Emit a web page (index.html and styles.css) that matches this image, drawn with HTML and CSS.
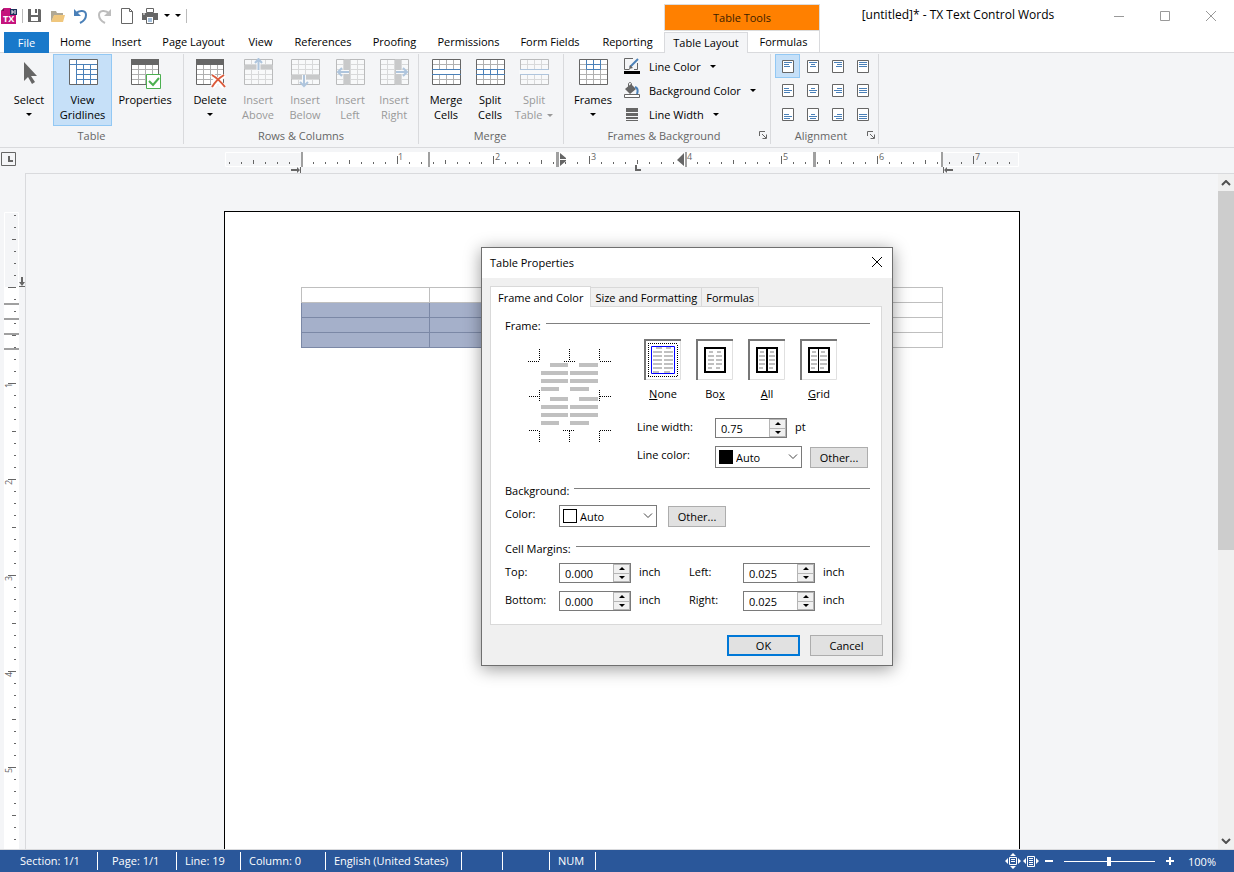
FILE: index.html
```html
<!DOCTYPE html>
<html lang="en">
<head>
<meta charset="utf-8">
<title>[untitled]* - TX Text Control Words</title>
<link rel="stylesheet" href="styles.css">
</head>
<body>

<!-- shared icon parts -->
<svg class="defs" width="0" height="0" aria-hidden="true">
  <symbol id="grid" viewBox="0 0 32 32">
    <path d="M.5.5h28v25H.5z" fill="#fff"/>
    <path d="M7.5 1v24M14.5 1v24M21.5 1v24M1 5.5h27M1 10.5h27M1 15.5h27M1 20.5h27" fill="none" stroke="#b0b0b0"/>
    <path d="M.5.5h28v25H.5z" fill="none" stroke="#666"/>
  </symbol>
  <symbol id="grid-head" viewBox="0 0 32 32">
    <path d="M.5.5h27v25H.5z" fill="#fff"/>
    <path d="M7.5 5v20M14.5 5v20M21.5 5v20M1 10.5h26M1 15.5h26M1 20.5h26" fill="none" stroke="#b0b0b0"/>
    <path d="M.5.5h27v25H.5z" fill="none" stroke="#666"/>
    <path d="M0 0h28v6H0z" fill="#666"/>
  </symbol>
  <symbol id="launcher" viewBox="0 0 8 8">
    <path d="M.5 5V.5H6M3 3l4 4M7.5 3.5v4h-4" fill="none" stroke="#666"/>
  </symbol>
  <symbol id="chevron" viewBox="0 0 10 6">
    <path d="M1 .5l4 4 4-4" fill="none" stroke="#444"/>
  </symbol>
</svg>

<div class="app">

  <header class="titlebar">
    <div class="quick">
      <svg class="logo" width="16" height="16" viewBox="0 0 16 16">
        <path d="M0 3l3-3h7v6h5v10H0z" fill="#c5147d"/>
        <path d="M0 3l3-3v3z" fill="#7d0d50"/>
        <path d="M9 1h7v6H9z" fill="#1c2f5a"/>
        <path d="M10 3h2v2h-2M13 3h2M13 5h2" fill="none" stroke="#fff"/>
        <text x="2" y="14" class="logo-text">TX</text>
      </svg>
      <span class="quick-sep"></span>
      <button class="quick-btn" aria-label="Save">
        <svg width="16" height="16" viewBox="0 0 16 16">
          <path d="M1 1h3v6h7V1h2l1 1v12H1z" fill="#666"/><path d="M8 1h2v4H8z" fill="#666"/><path d="M4 9h7v4H4z" fill="#fff"/>
        </svg>
      </button>
      <button class="quick-btn" aria-label="Open">
        <svg width="16" height="16" viewBox="0 0 16 16">
          <path d="M1 3h5l1 2h6v3H4l-3 6z" fill="#b0a894"/><path d="M4 7h11l-2 7H1z" fill="#f0c77d"/>
        </svg>
      </button>
      <button class="quick-btn" aria-label="Undo">
        <svg width="16" height="16" viewBox="0 0 16 16">
          <path d="M3 5.500C6 2 13 2 13 7c0 3-2 6-6 8" fill="none" stroke="#4a80b8" stroke-width="2"/><path d="M1 1v7h7z" fill="#4a80b8"/>
        </svg>
      </button>
      <button class="quick-btn" aria-label="Redo">
        <svg width="16" height="16" viewBox="0 0 16 16">
          <path d="M13 5.500C10 2 3 2 3 7c0 3 2 6 6 8" fill="none" stroke="#bdbdbd" stroke-width="2"/><path d="M15 1v7H8z" fill="#bdbdbd"/>
        </svg>
      </button>
      <button class="quick-btn" aria-label="New">
        <svg width="16" height="16" viewBox="0 0 16 16">
          <path d="M2.500.5h8l3 3v12h-11zM10.500.5v3h3" fill="#fff" stroke="#666"/>
        </svg>
      </button>
      <button class="quick-btn" aria-label="Print">
        <svg width="16" height="16" viewBox="0 0 16 16">
          <path d="M0 5h16v7H0z" fill="#666"/><path d="M4.500.5h7v4h-7z" fill="#fff" stroke="#666"/><path d="M1 6h2" stroke="#fff"/><path d="M4.500 8.500h7v7h-7z" fill="#fff" stroke="#666"/><path d="M6 11h4M6 13h4" stroke="#4a80b8"/>
        </svg>
      </button>
      <button class="quick-more" aria-label="Print options"><i class="caret"></i></button>
      <button class="quick-more" aria-label="Customize toolbar"><i class="caret"></i></button>
      <span class="quick-sep"></span>
    </div>
    <div class="context-title">Table Tools</div>
    <div class="window-title">[untitled]* - TX Text Control Words</div>
    <div class="window-buttons">
      <button aria-label="Minimize"><svg width="12" height="12"><path d="M1 6.500h10" stroke="#999"/></svg></button>
      <button aria-label="Maximize"><svg width="12" height="12"><path d="M1.500 1.500h9v9h-9z" fill="none" stroke="#999"/></svg></button>
      <button aria-label="Close"><svg width="12" height="12"><path d="M1 1l10 10M11 1L1 11" stroke="#999"/></svg></button>
    </div>
  </header>

  <nav class="tabs">
    <button class="tab file">File</button>
    <button class="tab">Home</button>
    <button class="tab">Insert</button>
    <button class="tab">Page Layout</button>
    <button class="tab">View</button>
    <button class="tab">References</button>
    <button class="tab">Proofing</button>
    <button class="tab">Permissions</button>
    <button class="tab">Form Fields</button>
    <button class="tab">Reporting</button>
    <button class="tab active">Table Layout</button>
    <button class="tab context-last">Formulas</button>
  </nav>

  <section class="ribbon">
    <div class="group">
      <div class="group-body">
        <button class="big w-48">
          <svg width="32" height="32" viewBox="0 0 32 32"><path d="M11 4v19l4-4 4 7 3-2-4-6h6z" fill="#666"/></svg>
          <span>Select</span><i class="caret"></i>
        </button>
        <button class="big w-59 pressed">
          <svg width="32" height="32" viewBox="-2 -1 32 32">
            <path d="M.5.5h28v25H.5z" fill="#fff"/>
            <path d="M1 5.500h27M7.500 1v24" stroke="#4a80b8"/>
            <path d="M14.500 5v20M21.500 5v20M7 10.500h21M7 15.500h21M7 20.500h21" stroke="#4a80b8"/>
            <path d="M.5.5h28v25H.5z" fill="none" stroke="#666"/>
          </svg>
          <span>View<br>Gridlines</span>
        </button>
        <button class="big w-66">
          <svg width="32" height="32" viewBox="-2 -1 32 32">
            <use href="#grid-head" width="32" height="32"/>
            <path d="M15.500 15.500h14v14h-14z" fill="#fff" stroke="#4cb050"/><path d="M18 22l4 4 6-7" fill="none" stroke="#4cb050" stroke-width="2"/>
          </svg>
          <span>Properties</span>
        </button>
      </div>
      <div class="group-foot"><span>Table</span></div>
    </div>

    <div class="group rows-group">
      <div class="group-body">
        <button class="big w-48">
          <svg width="32" height="32" viewBox="-2 -1 32 32">
            <use href="#grid-head" width="32" height="32"/>
            <path d="M16 16l12 12M28 16L16 28" stroke="#fff" stroke-width="5"/><path d="M16 16c5 3 9 7 13 12M28 16c-5 3-9 7-12 12" fill="none" stroke="#dc5b3c" stroke-width="2"/>
          </svg>
          <span>Delete</span><i class="caret"></i>
        </button>
        <button class="big w-48" disabled>
          <svg width="32" height="32" viewBox="-2 -1 32 32">
            <use href="#grid" width="32" height="32"/><path d="M0 6h29v4H0z" fill="#888"/>
            <path d="M14.500 12V2" stroke="#fff" stroke-width="4"/><path d="M14.500 11V1M11 4l3.500-4L18 4" fill="none" stroke="#4a80b8" stroke-width="2"/>
          </svg>
          <span>Insert<br>Above</span>
        </button>
        <button class="big w-46" disabled>
          <svg width="32" height="32" viewBox="-2 -1 32 32">
            <use href="#grid" width="32" height="32"/><path d="M0 16h29v4H0z" fill="#888"/>
            <path d="M13 16v10" stroke="#fff" stroke-width="4"/><path d="M13 16v10M9 23l4 4 4-4" fill="none" stroke="#4a80b8" stroke-width="2"/>
          </svg>
          <span>Insert<br>Below</span>
        </button>
        <button class="big w-44" disabled>
          <svg width="32" height="32" viewBox="-2 -1 32 32">
            <use href="#grid" width="32" height="32"/><path d="M8 0h6v26H8z" fill="#888"/>
            <path d="M3 13h10" stroke="#fff" stroke-width="4"/><path d="M13 13H2M6 9l-4 4 4 4" fill="none" stroke="#4a80b8" stroke-width="2"/>
          </svg>
          <span>Insert<br>Left</span>
        </button>
        <button class="big w-44" disabled>
          <svg width="32" height="32" viewBox="-2 -1 32 32">
            <use href="#grid" width="32" height="32"/><path d="M15 0h6v26h-6z" fill="#888"/>
            <path d="M16 13h11" stroke="#fff" stroke-width="4"/><path d="M16 13h11M23 9l4 4-4 4" fill="none" stroke="#4a80b8" stroke-width="2"/>
          </svg>
          <span>Insert<br>Right</span>
        </button>
      </div>
      <div class="group-foot"><span>Rows &amp; Columns</span></div>
    </div>

    <div class="group merge-group">
      <div class="group-body">
        <button class="big w-44">
          <svg width="32" height="32" viewBox="-2 -1 32 32">
            <use href="#grid" width="32" height="32"/><path d="M1 11h27v4H1z" fill="#fff"/><path d="M0 10.500h29M0 15.500h29" stroke="#4a80b8"/>
          </svg>
          <span>Merge<br>Cells</span>
        </button>
        <button class="big w-44">
          <svg width="32" height="32" viewBox="-2 -1 32 32">
            <use href="#grid" width="32" height="32"/><path d="M0 10.500h29M0 15.500h29M7.500 10v6M14.500 10v6M21.500 10v6" stroke="#4a80b8"/>
          </svg>
          <span>Split<br>Cells</span>
        </button>
        <button class="big w-44" disabled>
          <svg width="32" height="32" viewBox="-2 -1 32 32">
            <use href="#grid" width="32" height="32"/><path d="M-1 11h31v4H-1z" fill="#fff"/><path d="M0 10.500h29M0 15.500h29" stroke="#4a80b8"/>
          </svg>
          <span>Split<br>Table <i class="caret inline"></i></span>
        </button>
      </div>
      <div class="group-foot"><span>Merge</span></div>
    </div>

    <div class="group frames-group">
      <div class="group-body">
        <button class="big w-48">
          <svg width="32" height="32" viewBox="-2 -1 32 32">
            <use href="#grid" width="32" height="32"/><path d="M7.500 1v9.500h14V1M14.500 1v9M7 5.500h15" fill="none" stroke="#4a80b8"/>
          </svg>
          <span>Frames</span><i class="caret"></i>
        </button>
        <div class="small-list">
          <button class="small">
            <svg width="16" height="16" viewBox="0 0 16 16"><path d="M9 .5H.5v11h5M13.500 5v6.500H10" fill="none" stroke="#666"/><path d="M14 1l-8 8" stroke="#4a80b8" stroke-width="2"/><path d="M6 7l3 3-4 1z" fill="#666"/><path d="M0 13h16v3H0z"/></svg>
            Line Color <i class="caret"></i>
          </button>
          <button class="small">
            <svg width="16" height="16" viewBox="0 0 16 16"><path d="M1 7l6-5 5 5-6 5z" fill="#666"/><path d="M4.500 5V2c0-2 3-2 3 0v3" fill="none" stroke="#666"/><path d="M11 5c3 1 3 4 2 7" fill="none" stroke="#4a80b8" stroke-width="2"/><path d="M.5 12.500h15v3H.5z" fill="#fff" stroke="#666"/></svg>
            Background Color <i class="caret"></i>
          </button>
          <button class="small">
            <svg width="16" height="16" viewBox="0 0 16 16"><path d="M2 2h12v4H2zM2 7h12v3H2zM2 11h12v2H2zM2 14h12v1H2z" fill="#666"/></svg>
            Line Width <i class="caret"></i>
          </button>
        </div>
      </div>
      <div class="group-foot"><span>Frames &amp; Background</span><button class="launcher" aria-label="Frames and background options"><svg width="8" height="8"><use href="#launcher"/></svg></button></div>
    </div>

    <div class="group align-group">
      <div class="align-grid">
        <button class="pressed" aria-label="Top left"><svg width="12" height="13"><path class="box" d="M.5.5h11v12H.5z"/><path class="ln" d="M2 2.500h8M2 4.500h5M2 6.500h6"/></svg></button>
        <button aria-label="Top center"><svg width="12" height="13"><path class="box" d="M.5.5h11v12H.5z"/><path class="ln" d="M2 2.500h8M4 4.500h4M3 6.500h6"/></svg></button>
        <button aria-label="Top right"><svg width="12" height="13"><path class="box" d="M.5.5h11v12H.5z"/><path class="ln" d="M2 2.500h8M5 4.500h5M4 6.500h6"/></svg></button>
        <button aria-label="Top justified"><svg width="12" height="13"><path class="box" d="M.5.5h11v12H.5z"/><path class="ln" d="M2 2.500h8M2 4.500h8M2 6.500h8"/></svg></button>
        <button aria-label="Middle left"><svg width="12" height="13"><path class="box" d="M.5.5h11v12H.5z"/><path class="ln" d="M2 4.500h5M2 6.500h8M2 8.500h6"/></svg></button>
        <button aria-label="Middle center"><svg width="12" height="13"><path class="box" d="M.5.5h11v12H.5z"/><path class="ln" d="M4 4.500h4M2 6.500h8M3 8.500h6"/></svg></button>
        <button aria-label="Middle right"><svg width="12" height="13"><path class="box" d="M.5.5h11v12H.5z"/><path class="ln" d="M5 4.500h5M2 6.500h8M4 8.500h6"/></svg></button>
        <button aria-label="Middle justified"><svg width="12" height="13"><path class="box" d="M.5.5h11v12H.5z"/><path class="ln" d="M2 4.500h8M2 6.500h8M2 8.500h8"/></svg></button>
        <button aria-label="Bottom left"><svg width="12" height="13"><path class="box" d="M.5.5h11v12H.5z"/><path class="ln" d="M2 6.500h5M2 8.500h8M2 10.500h6"/></svg></button>
        <button aria-label="Bottom center"><svg width="12" height="13"><path class="box" d="M.5.5h11v12H.5z"/><path class="ln" d="M4 6.500h4M2 8.500h8M3 10.500h6"/></svg></button>
        <button aria-label="Bottom right"><svg width="12" height="13"><path class="box" d="M.5.5h11v12H.5z"/><path class="ln" d="M5 6.500h5M2 8.500h8M4 10.500h6"/></svg></button>
        <button aria-label="Bottom justified"><svg width="12" height="13"><path class="box" d="M.5.5h11v12H.5z"/><path class="ln" d="M2 6.500h8M2 8.500h8M2 10.500h8"/></svg></button>
      </div>
      <div class="group-foot"><span>Alignment</span><button class="launcher" aria-label="Alignment options"><svg width="8" height="8"><use href="#launcher"/></svg></button></div>
    </div>
  </section>

  <main class="workspace">
    <button class="tab-type" aria-label="Tab type"><svg width="15" height="14"><path d="M.5.5h14v13H.5z" fill="none" stroke="#666"/><path d="M8 4v5h4" fill="none" stroke="#666" stroke-width="2"/></svg></button>

    <div class="ruler-h">
      <svg width="796" height="25" viewBox="0 0 796 25">
        <defs>
          <pattern id="ticks-h" x="77" y="0" width="96" height="25" patternUnits="userSpaceOnUse">
            <path d="M.5 8v8M48.500 12v4M12.500 14v2M24.500 14v2M36.500 14v2M60.500 14v2M72.500 14v2M84.500 14v2" stroke="#666"/>
          </pattern>
        </defs>
        <path d="M1.500 4.500h793v14H1.500z" fill="none" stroke="#fff"/>
        <path d="M77 4h642v15H77z" fill="#fff"/>
        <path d="M1 4h794v15H1z" fill="url(#ticks-h)"/>
        <path d="M77 4h2v15h-2zM204 4h2v15h-2zM332 4h3v15h-3zM461 4h2v15h-2zM589 4h3v15h-3zM717 4h2v15h-2z" fill="#a0a0a0"/>
        <path d="M336 5l6 5v1h-6zM336 12h6v1l-6 5zM460 5v13l-7-6z" fill="#666"/>
        <path d="M412 17v5h5" fill="none" stroke="#666" stroke-width="2"/>
        <path d="M67 21h6v-2l3 3-3 3v-2h-6zM76 19h1v6h-1zM729 21h-6v-2l-3 3 3 3v-2h6zM719 19h1v6h-1z" fill="#666"/>
        <g class="ruler-num">
          <text x="174" y="12">1</text><text x="271" y="12">2</text><text x="367" y="12">3</text><text x="463" y="12">4</text><text x="559" y="12">5</text><text x="655" y="12">6</text><text x="751" y="12">7</text>
        </g>
      </svg>
    </div>

    <div class="ruler-v">
      <svg width="25" height="1200" viewBox="0 0 25 1200">
        <defs>
          <pattern id="ticks-v" x="0" y="114" width="25" height="96" patternUnits="userSpaceOnUse">
            <path d="M8 .5h8M12 48.500h4M14 12.500h2M14 24.500h2M14 36.500h2M14 60.500h2M14 72.500h2M14 84.500h2" stroke="#666"/>
          </pattern>
        </defs>
        <path d="M4.500 39.500h14v80h-14z" fill="none" stroke="#fff"/>
        <path d="M4 114h15v1086H4z" fill="#fff"/>
        <path d="M4 39h15v1161H4z" fill="url(#ticks-v)"/>
        <path d="M4 130h15v2H4zM4 145h15v2H4zM4 160h15v2H4zM4 175h15v2H4z" fill="#a0a0a0"/>
        <path d="M21 104h2v5h2l-3 4-3-4h2zM19 113h6v1h-6z" fill="#666"/>
        <g class="ruler-num">
          <text transform="translate(12 215) rotate(-90)">1</text>
          <text transform="translate(12 312) rotate(-90)">2</text>
          <text transform="translate(12 408) rotate(-90)">3</text>
          <text transform="translate(12 504) rotate(-90)">4</text>
          <text transform="translate(12 600) rotate(-90)">5</text>
        </g>
      </svg>
    </div>

    <div class="canvas">
      <div class="page">
        <table class="doc-table">
          <tr><td></td><td></td><td></td><td></td><td></td></tr>
          <tr><td class="sel"></td><td class="sel"></td><td class="sel"></td><td></td><td></td></tr>
          <tr><td class="sel"></td><td class="sel"></td><td class="sel"></td><td></td><td></td></tr>
          <tr><td class="sel"></td><td class="sel"></td><td class="sel"></td><td></td><td></td></tr>
        </table>
      </div>
    </div>

    <div class="scrollbar">
      <button aria-label="Scroll up"><svg width="10" height="6"><path d="M1 5l4-4 4 4" fill="none" stroke="#505050" stroke-width="2"/></svg></button>
      <div class="track"><div class="thumb"></div></div>
      <button aria-label="Scroll down"><svg width="10" height="6"><path d="M1 1l4 4 4-4" fill="none" stroke="#505050" stroke-width="2"/></svg></button>
    </div>
  </main>

  <footer class="status">
    <div class="status-cells">
      <span>Section: 1/1</span><span>Page: 1/1</span><span>Line: 19</span><span>Column: 0</span><span>English (United States)</span><span></span><span></span><span>NUM</span>
    </div>
    <div class="zoom">
      <button aria-label="Fit page"><svg width="16" height="16"><path d="M4.500 4.500h7v7h-7z" fill="none" stroke="#fff"/><path d="M6 6.500h4M6 8.500h4" stroke="#fff"/><path d="M8 0l3 3H5zM8 16l3-3H5zM0 8l3-3v6zM16 8l-3-3v6z" fill="#fff"/></svg></button>
      <button aria-label="Fit width"><svg width="16" height="16"><path d="M4.500 3.500h7v10h-7z" fill="none" stroke="#fff"/><path d="M6 5.500h4M6 7.500h4M6 9.500h4M6 11.500h4" stroke="#fff"/><path d="M0 8l3-3v6zM16 8l-3-3v6z" fill="#fff"/></svg></button>
      <button aria-label="Zoom out"><svg width="16" height="16"><path d="M4 8h8" stroke="#fff" stroke-width="2"/></svg></button>
      <input type="range" class="zoom-range" min="0" max="200" value="98" aria-label="Zoom">
      <button aria-label="Zoom in"><svg width="16" height="16"><path d="M4 8h8M8 4v8" stroke="#fff" stroke-width="2"/></svg></button>
      <span class="zoom-value">100%</span>
    </div>
  </footer>

  <div class="dialog" role="dialog" aria-labelledby="dialog-title">
    <div class="dialog-head">
      <span id="dialog-title">Table Properties</span>
      <button class="dialog-close" aria-label="Close"><svg width="12" height="12"><path d="M1 1l10 10M11 1L1 11" stroke="#000"/></svg></button>
    </div>
    <div class="dialog-tabs">
      <button class="active">Frame and Color</button>
      <button>Size and Formatting</button>
      <button>Formulas</button>
    </div>
    <div class="panel">

      <div class="section-title"><span>Frame:</span><hr></div>
      <div class="frame-row">
        <svg class="preview" width="84" height="94" viewBox="0 0 84 94">
          <g fill="none" stroke="#000" stroke-dasharray="1 1">
            <path d="M0 12.500h11M11.500 0v12M36 12.500h11M41.500 0v12M71.500 0v12M72 12.500h11"/>
            <path d="M1 47.500h10M11.500 41v11M71.500 41v11M72 47.500h11"/>
            <path d="M1 81.500h10M11.500 82v11M35 81.500h12M41.500 82v11M71.500 82v11M72 81.500h11"/>
          </g>
          <path d="M22 14h18v4H22zM13 22h27v4H13zM13 30h27v4H13zM13 38h18v4H13zM51 14h19v4H51zM42 22h28v4H42zM42 30h28v4H42zM42 38h19v4H42zM22 48h18v4H22zM13 56h27v4H13zM13 64h27v4H13zM13 72h18v4H13zM51 48h19v4H51zM42 56h28v4H42zM42 64h28v4H42zM42 72h19v4H42z" fill="#c0c0c0"/>
        </svg>
        <div class="frame-side">
          <div class="frame-types">
            <button>
              <svg width="38" height="41" viewBox="0 0 38 41">
                <path d="M0 0h37v41H0z" fill="#fff"/><path d="M36.500 0v40.500H0" fill="none" stroke="#e0e0e0"/><path d="M1 41V1h36" fill="none" stroke="#777" stroke-width="2"/>
                <path d="M4 4.500h30M4 37.500h30M4.500 6v31M33.500 6v31" fill="none" stroke="#000" stroke-dasharray="1 1"/>
                <path d="M12 9h6M9 13h9M9 17h9M9 21h9M9 25h9M9 29h9M9 33h6M22 9h5M20 13h9M20 17h9M20 21h9M20 25h9M20 29h9M20 33h6" fill="none" stroke="#c0c0c0" stroke-width="2"/>
                <path d="M7.500 7.500h23v27h-23z" fill="none" stroke="#00f"/>
              </svg>
              <span><u>N</u>one</span>
            </button>
            <button>
              <svg width="38" height="41" viewBox="0 0 38 41">
                <path d="M0 0h37v41H0z" fill="#fff"/><path d="M36.500 0v40.500H0" fill="none" stroke="#e0e0e0"/><path d="M1 41V1h36" fill="none" stroke="#777" stroke-width="2"/>
                <path d="M9 9h20v24H9z" fill="none" stroke="#000" stroke-width="2"/>
                <path d="M13 13h4M12 17h6M12 21h6M12 25h6M12 29h4M21 13h4M20 17h6M20 21h6M20 25h6M20 29h4" fill="none" stroke="#c0c0c0" stroke-width="2"/>
              </svg>
              <span>Bo<u>x</u></span>
            </button>
            <button>
              <svg width="38" height="41" viewBox="0 0 38 41">
                <path d="M0 0h37v41H0z" fill="#fff"/><path d="M36.500 0v40.500H0" fill="none" stroke="#e0e0e0"/><path d="M1 41V1h36" fill="none" stroke="#777" stroke-width="2"/>
                <path d="M9 9h20v24H9zM19 9v24" fill="none" stroke="#000" stroke-width="2"/>
                <path d="M12 13h4M11 17h6M11 21h6M11 25h6M11 29h4M22 13h4M21 17h6M21 21h6M21 25h6M21 29h4" fill="none" stroke="#c0c0c0" stroke-width="2"/>
              </svg>
              <span><u>A</u>ll</span>
            </button>
            <button>
              <svg width="38" height="41" viewBox="0 0 38 41">
                <path d="M0 0h37v41H0z" fill="#fff"/><path d="M36.500 0v40.500H0" fill="none" stroke="#e0e0e0"/><path d="M1 41V1h36" fill="none" stroke="#777" stroke-width="2"/>
                <path d="M9 9h20v24H9z" fill="none" stroke="#000" stroke-width="2"/><path d="M18.500 9v24" stroke="#000"/>
                <path d="M12 13h4M11 17h6M11 21h6M11 25h6M11 29h4M21 13h4M20 17h7M20 21h7M20 25h7M20 29h4" fill="none" stroke="#c0c0c0" stroke-width="2"/>
              </svg>
              <span><u>G</u>rid</span>
            </button>
          </div>
          <div class="field-row">
            <label for="line-width">Line width:</label>
            <div class="spin"><input type="text" id="line-width" value="0.75"><span class="spin-btns"><button aria-label="Increase"></button><button aria-label="Decrease"></button></span></div>
            <span class="unit">pt</span>
          </div>
          <div class="field-row">
            <label for="line-color">Line color:</label>
            <div class="combo narrow"><select id="line-color"><option>Auto</option></select><i class="swatch black"></i><svg class="arrow" width="10" height="6"><use href="#chevron"/></svg></div>
            <button class="btn other">Other...</button>
          </div>
        </div>
      </div>

      <div class="section-title"><span>Background:</span><hr></div>
      <div class="color-row">
        <label for="back-color">Color:</label>
        <div class="combo"><select id="back-color"><option>Auto</option></select><i class="swatch"></i><svg class="arrow" width="10" height="6"><use href="#chevron"/></svg></div>
        <button class="btn other">Other...</button>
      </div>

      <div class="section-title"><span>Cell Margins:</span><hr></div>
      <div class="margins">
        <label for="m-top">Top:</label>
        <div class="spin"><input type="text" id="m-top" value="0.000"><span class="spin-btns"><button aria-label="Increase"></button><button aria-label="Decrease"></button></span></div>
        <span class="unit">inch</span>
        <label for="m-left">Left:</label>
        <div class="spin"><input type="text" id="m-left" value="0.025"><span class="spin-btns"><button aria-label="Increase"></button><button aria-label="Decrease"></button></span></div>
        <span class="unit">inch</span>
        <label for="m-bottom">Bottom:</label>
        <div class="spin"><input type="text" id="m-bottom" value="0.000"><span class="spin-btns"><button aria-label="Increase"></button><button aria-label="Decrease"></button></span></div>
        <span class="unit">inch</span>
        <label for="m-right">Right:</label>
        <div class="spin"><input type="text" id="m-right" value="0.025"><span class="spin-btns"><button aria-label="Increase"></button><button aria-label="Decrease"></button></span></div>
        <span class="unit">inch</span>
      </div>
    </div>
    <div class="dialog-foot">
      <button class="btn default">OK</button>
      <button class="btn">Cancel</button>
    </div>
  </div>

</div>
</body>
</html>
```
FILE: styles.css
```css
* {
  box-sizing: border-box;
}
html, body {
  height: 100%;
  margin: 0;
}
body {
  font: 11px/15px "Open Sans", "Noto Sans", sans-serif;
  color: #000;
  background: #fff;
  overflow: hidden;
}
button, input, select {
  font: inherit;
  color: inherit;
  margin: 0;
}
button {
  padding: 0;
  border: 0;
  background: none;
  white-space: nowrap;
}
svg {
  display: block;
  flex: none;
}
.defs {
  position: absolute;
}
.app {
  position: relative;
  display: flex;
  flex-direction: column;
  height: 100vh;
}
.caret {
  display: block;
  border: 3px solid transparent;
  border-top-color: currentColor;
  border-bottom: 0;
}
.caret.inline {
  display: inline-block;
  margin: 0 0 2px 2px;
}

/* title bar */
.titlebar {
  display: grid;
  grid-template-columns: 664px 156px 1fr auto;
  height: 30px;
}
.quick {
  display: flex;
  align-items: center;
  padding-left: 1px;
}
.logo {
  margin-right: 5px;
}
.logo-text {
  font-size: 9px;
  font-weight: bold;
  fill: #fff;
}
.quick-sep {
  width: 1px;
  height: 14px;
  background: #bbb;
}
.quick-btn {
  width: 23px;
  display: flex;
  justify-content: center;
}
.quick-more {
  width: 11px;
  display: flex;
  justify-content: center;
}
.quick-more + .quick-sep {
  margin-left: 3px;
}
.context-title {
  margin-top: 4px;
  border: 1px solid #dcdcdc;
  background: #ff8000;
  color: #3a1d00;
  line-height: 25px;
  text-align: center;
}
.window-title {
  font-size: 12px;
  line-height: 30px;
  text-align: center;
  white-space: nowrap;
}
.window-buttons {
  display: flex;
}
.window-buttons button {
  width: 46px;
  display: flex;
  align-items: center;
  justify-content: center;
}

/* ribbon tabs */
.tabs {
  display: grid;
  grid-template-columns: 45px 53px 49px 85px 49px 76px 67px 81px 82px 73px 84px 72px;
  height: 23px;
  padding-left: 4px;
  background: linear-gradient(#d9dadd, #d9dadd) bottom / 100% 1px no-repeat;
}
.tab {
  line-height: 23px;
  text-align: center;
}
.tab.file {
  margin-top: 2px;
  line-height: 20px;
  background: #1979ca;
  color: #fff;
}
.tab.active {
  margin-top: 2px;
  border: 1px solid #d9dadd;
  border-bottom: 0;
  background: #f4f5f7;
  line-height: 20px;
}
.tab.context-last {
  border-right: 1px solid #d9dadd;
}

/* ribbon */
.ribbon {
  display: flex;
  height: 95px;
  background: #f4f5f7;
  border-bottom: 1px solid #d9dadd;
}
.group {
  display: flex;
  flex-direction: column;
  margin: 1px 0 3px;
  padding: 0 5px;
  border-right: 1px solid #d9dadd;
}
.rows-group {
  padding: 0 2px;
}
.merge-group {
  padding-right: 7px;
}
.frames-group {
  min-width: 207px;
  padding-right: 3px;
}
.align-group {
  padding: 0 3px 0 4px;
}
.group-body {
  display: flex;
  height: 72px;
}
.group-foot {
  display: flex;
  align-items: center;
  height: 18px;
  color: #666;
}
.group-foot span {
  flex: 1;
  text-align: center;
}
.launcher {
  width: 8px;
}
.big {
  display: flex;
  flex-direction: column;
  align-items: center;
  padding-top: 3px;
  border: 1px solid transparent;
}
.big span {
  margin-top: 2px;
}
.big > .caret {
  margin-top: 6px;
}
.big:disabled {
  color: #999;
}
.big:disabled svg {
  opacity: .4;
}
.w-44 { width: 44px; }
.w-46 { width: 46px; }
.w-48 { width: 48px; }
.w-59 { width: 59px; }
.w-66 { width: 66px; }
.pressed {
  border: 1px solid #92c8f4;
  background: #c6e0f8;
}
.small-list {
  display: flex;
  flex-direction: column;
  padding-left: 7px;
}
.small {
  display: flex;
  align-items: center;
  gap: 9px;
  height: 24px;
}
.align-grid {
  display: grid;
  grid-template-columns: repeat(4, 25px);
  grid-auto-rows: 24px;
}
.align-grid button {
  display: flex;
  align-items: center;
  justify-content: center;
  border-width: 1px;
}
.box {
  fill: #fff;
  stroke: #666;
}
.ln {
  stroke: #4a80b8;
}

/* rulers, page and scrollbar */
.workspace {
  flex: 1;
  min-height: 0;
  display: grid;
  grid-template-columns: 25px 1fr 16px;
  grid-template-rows: 25px 1fr;
  background: #f4f5f7;
  border-bottom: 1px solid #d9dadd;
}
.tab-type {
  display: flex;
  align-items: flex-start;
  padding: 4px 0 0 1px;
}
.ruler-h {
  display: flex;
  justify-content: center;
  grid-column: 2;
  padding-left: 1px;
}
.ruler-v {
  grid-column: 1;
  grid-row: 2;
  overflow: hidden;
}
.ruler-num {
  font-size: 9px;
  fill: #666;
}
.canvas {
  grid-column: 2;
  grid-row: 2;
  display: flex;
  justify-content: center;
  padding-top: 37px;
  border-top: 1px solid #d9dadd;
  border-left: 1px solid #d9dadd;
  overflow: hidden;
}
.page {
  width: 796px;
  padding: 75px 76px 0;
  border: 1px solid #000;
  border-bottom: 0;
  background: #fff;
}
.doc-table {
  width: 642px;
  table-layout: fixed;
  border-collapse: collapse;
}
.doc-table td {
  height: 15px;
  padding: 0;
  border: 1px solid #bfbfbf;
}
.doc-table td.sel {
  border-color: #7b88a6;
  background: #a5b0ca;
}
.scrollbar {
  grid-column: 3;
  grid-row: 2;
  display: flex;
  flex-direction: column;
  border-top: 1px solid #d9dadd;
  background: #f0f0f0;
}
.scrollbar button {
  height: 17px;
  display: flex;
  align-items: center;
  justify-content: center;
}
.track {
  flex: 1;
}
.thumb {
  height: 56%;
  background: #cdcdcd;
}

/* status bar */
.status {
  display: flex;
  justify-content: space-between;
  align-items: center;
  height: 22px;
  background: #2a579a;
  color: #fff;
}
.status-cells {
  display: grid;
  grid-template-columns: 98px 79px 64px 85px 136px 41px 47px 46px;
}
.status-cells span {
  height: 18px;
  line-height: 18px;
  padding-left: 8px;
  border-right: 1px solid #fff;
  white-space: nowrap;
}
.status-cells span:first-child {
  padding-left: 20px;
}
.status-cells span:nth-child(2) {
  padding-left: 14px;
}
.zoom {
  display: flex;
  align-items: center;
  gap: 2px;
  padding-right: 18px;
}
.zoom-range {
  appearance: none;
  width: 91px;
  height: 16px;
  margin: 0 5px;
  background: linear-gradient(#fff, #fff) center / 100% 1px no-repeat;
}
.zoom-range::-webkit-slider-thumb {
  appearance: none;
  width: 4px;
  height: 9px;
  background: #fff;
}
.zoom-value {
  margin-left: 8px;
}

/* dialog */
.dialog {
  position: absolute;
  left: 481px;
  top: 247px;
  width: 412px;
  border: 1px solid #6f6f6f;
  background: #f0f0f0;
  box-shadow: 0 3px 16px rgba(0, 0, 0, .4);
}
.dialog-head {
  display: flex;
  align-items: center;
  justify-content: space-between;
  height: 30px;
  padding: 0 9px 2px 8px;
  background: #fff;
}
.dialog-tabs {
  display: flex;
  align-items: flex-end;
  height: 28px;
  padding: 0 8px;
}
.dialog-tabs button {
  height: 19px;
  padding: 0 4px;
  border: 1px solid #d9d9d9;
  border-left: 0;
  border-bottom: 0;
}
.dialog-tabs button.active {
  height: 21px;
  padding: 0 7px;
  margin-bottom: -1px;
  border-left: 1px solid #d9d9d9;
  background: #fff;
  position: relative;
}
.panel {
  margin: 0 10px 0 8px;
  padding: 11px 11px 13px 14px;
  border: 1px solid #d9d9d9;
  background: #fff;
}
.section-title {
  display: flex;
  gap: 5px;
  height: 16px;
}
.section-title hr {
  flex: 1;
  height: 1px;
  margin: 5px 0 0;
  border: 0;
  background: #808080;
}
.frame-row {
  display: flex;
  padding: 5px 0 0 23px;
}
.preview {
  margin-top: 10px;
}
.frame-side {
  padding-left: 25px;
}
.frame-types {
  display: grid;
  grid-template-columns: repeat(4, 52px);
}
.frame-types button {
  display: flex;
  flex-direction: column;
  align-items: center;
  gap: 6px;
}
.field-row {
  display: grid;
  grid-template-columns: 70px auto auto;
  justify-content: start;
  column-gap: 8px;
  height: 22px;
  margin-top: 6px;
}
.frame-types + .field-row {
  margin-top: 17px;
}
.panel label, .unit {
  padding-top: 1px;
}
.frame-row + .section-title {
  margin-top: 15px;
}
.color-row + .section-title {
  margin-top: 14px;
}
.spin {
  display: flex;
  width: 72px;
  height: 20px;
  border: 1px solid #7a7a7a;
  background: #fff;
}
.spin input {
  flex: 1;
  min-width: 0;
  padding: 0 0 0 5px;
  border: 0;
  background: none;
  outline: 0;
}
.spin-btns {
  display: grid;
  width: 17px;
  gap: 1px;
  padding: 1px;
  background: #b5b5b5;
}
.spin-btns button {
  display: flex;
  align-items: center;
  justify-content: center;
  background: #f0f0f0;
}
.spin-btns button::before {
  content: "";
  border: 3px solid transparent;
  border-top: 0;
  border-bottom-color: #000;
}
.spin-btns button:last-child::before {
  border-top: 3px solid #000;
  border-bottom: 0;
}
.combo {
  display: grid;
  align-items: center;
  width: 98px;
  height: 22px;
}
.combo.narrow {
  width: 87px;
}
.combo > * {
  grid-area: 1 / 1;
}
.combo select {
  appearance: none;
  width: 100%;
  height: 22px;
  padding: 0 0 0 20px;
  border: 1px solid #7a7a7a;
  border-radius: 0;
  background: #fff;
}
.swatch {
  width: 14px;
  height: 14px;
  margin-left: 4px;
  border: 1px solid #000;
  pointer-events: none;
}
.swatch.black {
  background: #000;
}
.combo .arrow {
  justify-self: end;
  margin-right: 4px;
  pointer-events: none;
}
.btn {
  width: 73px;
  height: 21px;
  border: 1px solid #adadad;
  background: #e1e1e1;
}
.btn.other {
  width: 58px;
  margin-top: 1px;
}
.btn.default {
  border: 2px solid #0078d7;
}
.color-row {
  display: flex;
  padding-top: 6px;
}
.color-row label {
  width: 54px;
}
.color-row .btn {
  margin-left: 11px;
}
.margins {
  display: grid;
  grid-template-columns: 54px 72px 58px 54px 72px auto;
  row-gap: 8px;
  padding-top: 6px;
}
.margins .unit {
  padding-left: 8px;
}
.dialog-foot {
  display: flex;
  justify-content: flex-end;
  gap: 10px;
  padding: 10px 9px 9px;
}
```
